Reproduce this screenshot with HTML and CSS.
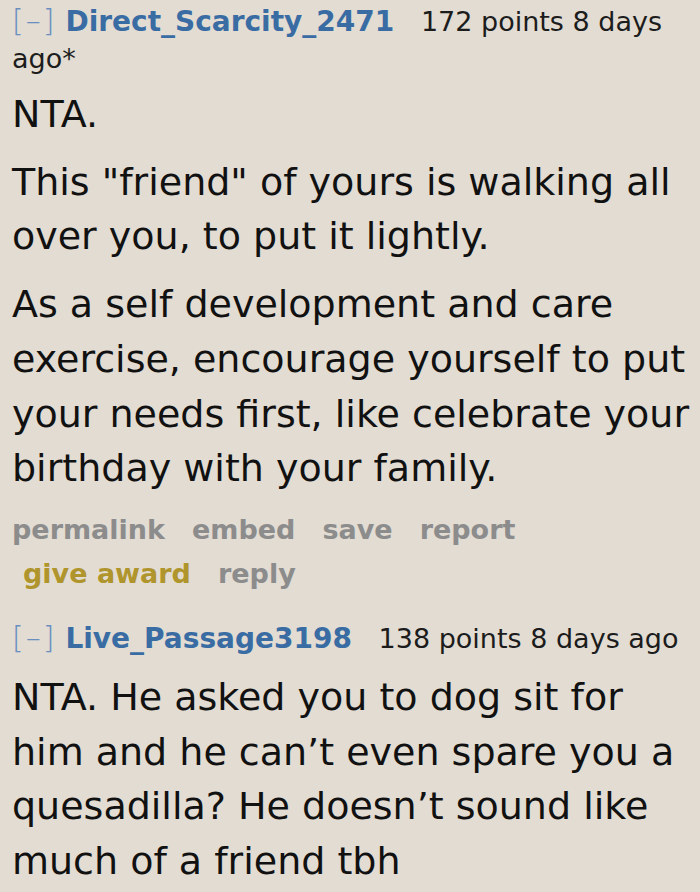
FILE: index.html
```html
<!DOCTYPE html>
<html>
<head>
<meta charset="utf-8">
<link rel="stylesheet" href="styles.css">
</head>
<body>
<div class="comment">
  <p class="tagline"><a class="expand">[–]</a><a class="author">Direct_Scarcity_2471</a> <span class="score">172 points</span> <span class="time">8 days ago</span>*</p>
  <div class="md">
    <p>NTA.</p>
    <p>This "friend" of yours is walking all over you, to put it lightly.</p>
    <p>As a self development and care exercise, encourage yourself to put your needs first, like celebrate your birthday with your family.</p>
  </div>
  <ul class="buttons">
    <li>permalink</li>
    <li>embed</li>
    <li>save</li>
    <li>report</li>
    <li class="award">give award</li>
    <li>reply</li>
  </ul>
</div>
<div class="comment second">
  <p class="tagline"><a class="expand">[–]</a><a class="author">Live_Passage3198</a> <span class="score">138 points</span> <span class="time">8 days ago</span></p>
  <div class="md">
    <p>NTA. He asked you to dog sit for him and he can’t even spare you a quesadilla? He doesn’t sound like much of a friend tbh</p>
  </div>
</div>
</body>
</html>
```

FILE: styles.css
```css
html, body {
  margin: 0;
  padding: 0;
  background: #e2dcd3;
}
body {
  font-family: "DejaVu Sans", Verdana, sans-serif;
  color: #111;
  padding: 3px 0 0 12px;
  width: 688px;
}
.tagline {
  margin: 0;
  font-size: 27px;
  line-height: 37px;
  color: #1c1c1c;
}
.expand {
  color: #6a8fbf;
  font-size: 30px;
  font-weight: 300;
  line-height: 1;
  letter-spacing: 2px;
  margin-right: 9px;
}
.author {
  color: #3a6ca4;
  font-weight: bold;
  font-size: 28px;
  line-height: 1;
  margin-right: 18px;
}
.md {
  font-size: 38px;
  line-height: 54.7px;
  margin-top: 10px;
}
.md p {
  margin: 0 0 13px 0;
}
.buttons {
  list-style: none;
  margin: 0;
  padding: 0;
  display: flex;
  flex-wrap: wrap;
  font-size: 27px;
  font-weight: bold;
  line-height: 44px;
  color: #8c8c8c;
  column-gap: 27px;
  margin-top: -1px;
}
.buttons .award {
  color: #b0952c;
  margin-left: 11px;
}
.second {
  margin-top: 24px;
}
.second .md {
  margin-top: 13px;
}
```
